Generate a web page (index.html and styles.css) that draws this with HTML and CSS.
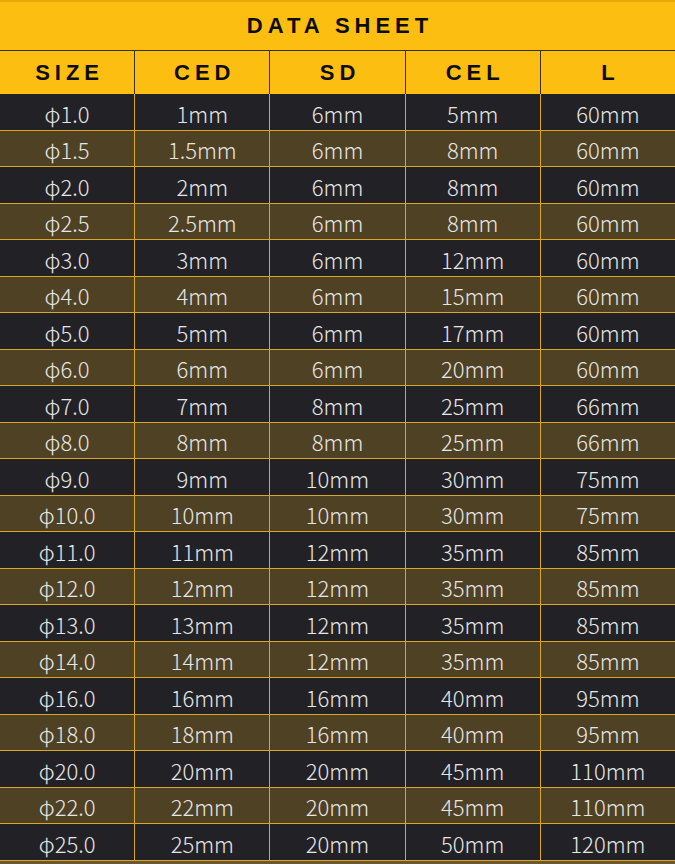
FILE: index.html
```html
<!DOCTYPE html>
<html>
<head>
<meta charset="utf-8">
<link rel="stylesheet" href="styles.css">
</head>
<body>
<div class="sheet">
  <div class="title">DATA SHEET</div>
  <div class="head">
    <div class="hcell">SIZE</div><div class="hcell">CED</div><div class="hcell">SD</div><div class="hcell">CEL</div><div class="hcell">L</div>
  </div>
  <div class="table">
    <div class="row dark"><div>φ1.0</div><div>1mm</div><div>6mm</div><div>5mm</div><div>60mm</div></div>
    <div class="row brown"><div>φ1.5</div><div>1.5mm</div><div>6mm</div><div>8mm</div><div>60mm</div></div>
    <div class="row dark"><div>φ2.0</div><div>2mm</div><div>6mm</div><div>8mm</div><div>60mm</div></div>
    <div class="row brown"><div>φ2.5</div><div>2.5mm</div><div>6mm</div><div>8mm</div><div>60mm</div></div>
    <div class="row dark"><div>φ3.0</div><div>3mm</div><div>6mm</div><div>12mm</div><div>60mm</div></div>
    <div class="row brown"><div>φ4.0</div><div>4mm</div><div>6mm</div><div>15mm</div><div>60mm</div></div>
    <div class="row dark"><div>φ5.0</div><div>5mm</div><div>6mm</div><div>17mm</div><div>60mm</div></div>
    <div class="row brown"><div>φ6.0</div><div>6mm</div><div>6mm</div><div>20mm</div><div>60mm</div></div>
    <div class="row dark"><div>φ7.0</div><div>7mm</div><div>8mm</div><div>25mm</div><div>66mm</div></div>
    <div class="row brown"><div>φ8.0</div><div>8mm</div><div>8mm</div><div>25mm</div><div>66mm</div></div>
    <div class="row dark"><div>φ9.0</div><div>9mm</div><div>10mm</div><div>30mm</div><div>75mm</div></div>
    <div class="row brown"><div>φ10.0</div><div>10mm</div><div>10mm</div><div>30mm</div><div>75mm</div></div>
    <div class="row dark"><div>φ11.0</div><div>11mm</div><div>12mm</div><div>35mm</div><div>85mm</div></div>
    <div class="row brown"><div>φ12.0</div><div>12mm</div><div>12mm</div><div>35mm</div><div>85mm</div></div>
    <div class="row dark"><div>φ13.0</div><div>13mm</div><div>12mm</div><div>35mm</div><div>85mm</div></div>
    <div class="row brown"><div>φ14.0</div><div>14mm</div><div>12mm</div><div>35mm</div><div>85mm</div></div>
    <div class="row dark"><div>φ16.0</div><div>16mm</div><div>16mm</div><div>40mm</div><div>95mm</div></div>
    <div class="row brown"><div>φ18.0</div><div>18mm</div><div>16mm</div><div>40mm</div><div>95mm</div></div>
    <div class="row dark"><div>φ20.0</div><div>20mm</div><div>20mm</div><div>45mm</div><div>110mm</div></div>
    <div class="row brown"><div>φ22.0</div><div>22mm</div><div>20mm</div><div>45mm</div><div>110mm</div></div>
    <div class="row dark"><div>φ25.0</div><div>25mm</div><div>20mm</div><div>50mm</div><div>120mm</div></div>
  </div>
</div>
</body>
</html>
```
FILE: styles.css
```css
html, body {
  margin: 0;
  padding: 0;
  background: #6a5834;
}
.sheet {
  width: 675px;
  display: flex;
  flex-direction: column;
}
.title {
  height: 48px;
  border-top: 2px solid #e6aa0a;
  background: #fdbe12;
  color: #0d0d0d;
  font-family: "Liberation Sans", Arial, sans-serif;
  font-weight: bold;
  font-size: 22px;
  letter-spacing: 5px;
  padding-left: 5px;
  display: flex;
  align-items: center;
  justify-content: center;
}
.head {
  height: 43px;
  border-top: 1px solid #3a2c10;
  background: #3a2c10;
  display: grid;
  grid-template-columns: repeat(5, 1fr);
  column-gap: 1px;
}
.hcell {
  background: #fdbe12;
  color: #0d0d0d;
  font-family: "Liberation Sans", Arial, sans-serif;
  font-weight: bold;
  font-size: 22px;
  letter-spacing: 5px;
  padding-left: 5px;
  display: flex;
  align-items: center;
  justify-content: center;
}
.table {
  background: #dca625;
  display: flex;
  flex-direction: column;
  row-gap: 1px;
  padding-bottom: 1px;
}
.row {
  height: 35.5px;
  display: grid;
  grid-template-columns: repeat(5, 1fr);
  column-gap: 1px;
}
.row > div {
  display: flex;
  align-items: center;
  justify-content: center;
  padding-top: 2px;
  color: #e6e6e6;
  font-family: "Noto Sans CJK SC", "Noto Sans", sans-serif;
  font-weight: 300;
  font-size: 22px;
}
.dark > div {
  background: #222226;
}
.brown > div {
  background: #4f4124;
}
```
